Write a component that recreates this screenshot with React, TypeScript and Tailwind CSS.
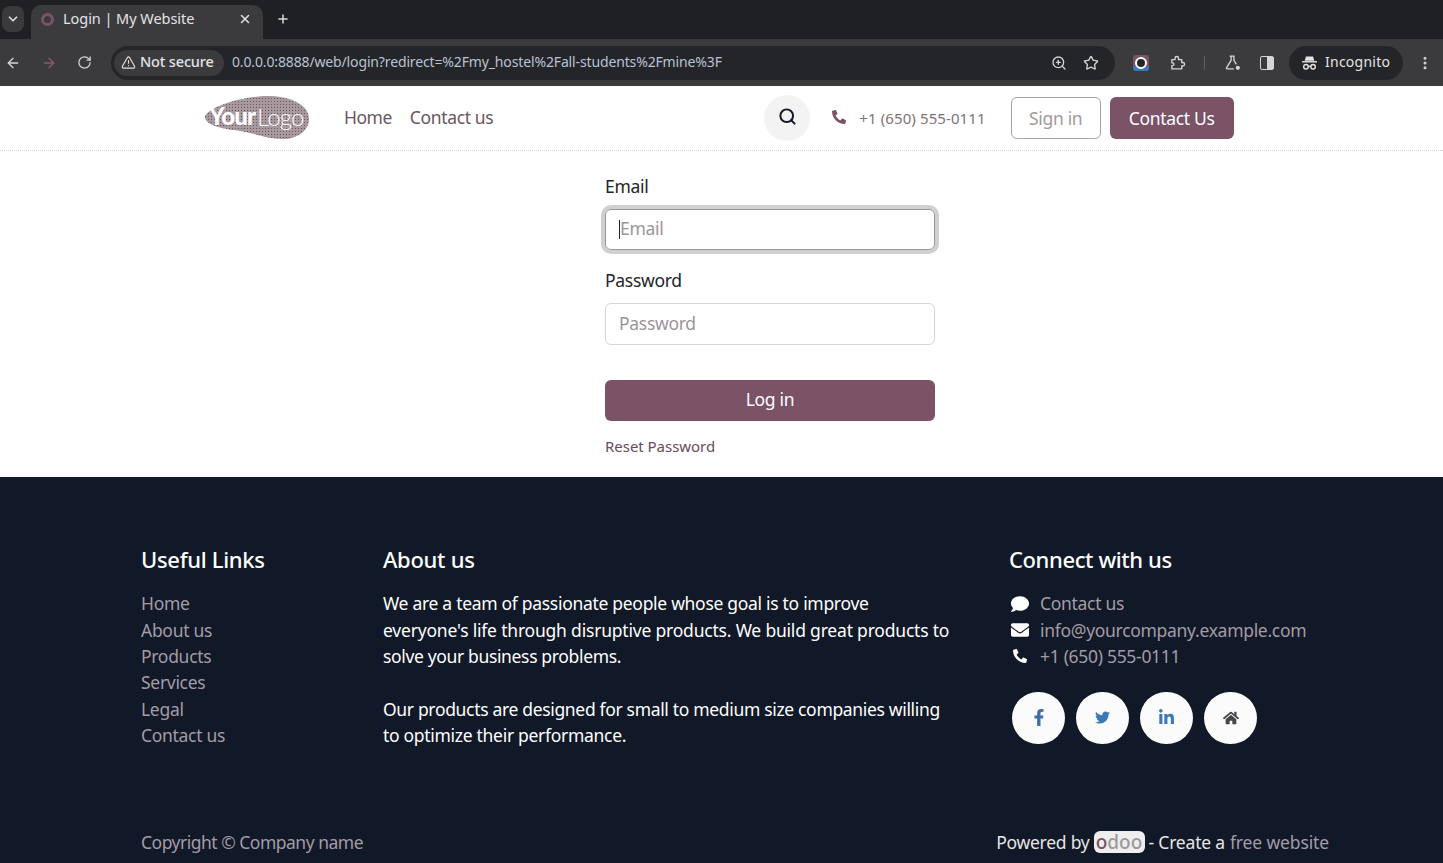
import {
  ArrowLeft,
  ArrowRight,
  ChevronDown,
  MoreVertical,
  Plus,
  RotateCw,
  Search,
  Star,
  TriangleAlert,
  X,
  ZoomIn,
} from 'lucide-react';
import { FaComment, FaEnvelope, FaFacebookF, FaHome, FaLinkedinIn, FaPhone, FaTwitter } from 'react-icons/fa';

const usefulLinks = ['Home', 'About us', 'Products', 'Services', 'Legal', 'Contact us'];

const contacts = [
  { text: 'Contact us', icon: <FaComment className="w-[18px] h-[18px]" /> },
  { text: 'info@yourcompany.example.com', icon: <FaEnvelope className="w-[18px] h-[18px]" /> },
  { text: '+1 (650) 555-0111', icon: <FaPhone className="w-[14px] h-[14px] ml-0.5 -scale-x-100" /> },
];

const socials = [
  { name: 'facebook', icon: <FaFacebookF className="w-[14px] h-[17px] text-[#3b6fb0]" /> },
  { name: 'twitter', icon: <FaTwitter className="w-[15px] h-[15px] text-[#3b78b8]" /> },
  { name: 'linkedin', icon: <FaLinkedinIn className="w-[17px] h-[17px] text-[#3b78b8]" /> },
  { name: 'home', icon: <FaHome className="w-[16px] h-[16px] text-[#44474f]" /> },
];

function BrowserChrome() {
  return (
    <div>
      {/* Tab strip */}
      <div className="h-[39px] bg-[#1f2023] flex items-end pl-[2px]">
        <div className="w-[22px] h-[26px] mb-[7px] rounded-lg bg-[#3a3a3d] flex items-center justify-center text-[#d8d8da]">
          <ChevronDown className="w-3.5 h-3.5" strokeWidth={3} />
        </div>
        <div className="ml-[7px] w-[232px] h-[34px] pb-[6px] rounded-t-[10px] bg-[#3b3b3e] flex items-center pl-[10px] pr-[11px] text-[#e3e3e5]">
          <span className="w-[13px] h-[13px] rounded-full border-[3px] border-[#7c5266]" />
          <span className="ml-[9px] text-[14.5px] flex-1 tracking-[-0.05px]">Login | My Website</span>
          <X className="w-3.5 h-3.5" strokeWidth={2.5} />
        </div>
        <Plus className="ml-[13px] mb-[13px] w-3.5 h-3.5 text-[#dcdcde]" strokeWidth={2.5} />
      </div>

      {/* Toolbar */}
      <div className="h-[47px] bg-[#3b3b3e] flex items-center pl-[5px] text-[#d5d5d8]">
        <ArrowLeft className="w-4 h-4" strokeWidth={2} />
        <ArrowRight className="ml-[20px] w-4 h-4 text-[#8a5a70]" strokeWidth={2} />
        <RotateCw className="ml-[20px] w-[15px] h-[15px]" strokeWidth={2} />
        <div className="ml-[19px] w-[1004px] h-[34px] rounded-full bg-[#242528] flex items-center pl-[3px] pr-[16px]">
          <div className="h-[26px] w-[110px] rounded-full bg-[#3b3b3e] flex items-center pl-[7px] text-[#e3e3e5]">
            <TriangleAlert className="w-[15px] h-[15px]" strokeWidth={1.8} />
            <span className="ml-[4px] -mt-[2px] text-[14.5px] font-medium tracking-[-0.15px]">Not secure</span>
          </div>
          <span className="ml-[8px] -mt-[2px] text-[14px] tracking-[-0.14px] text-[#b9c2d6] flex-1">
            0.0.0.0:8888/web/login?redirect=%2Fmy_hostel%2Fall-students%2Fmine%3F
          </span>
          <ZoomIn className="w-4 h-4" strokeWidth={2} />
          <Star className="ml-[16px] w-4 h-4" strokeWidth={2} />
        </div>
        <div className="ml-[18px] w-4 h-4 rounded-[3px] bg-[linear-gradient(#7c5266_70%,#3b78b8_70%)] flex items-center justify-center">
          <span className="w-[12px] h-[12px] rounded-full border-2 border-white bg-[#242528]" />
        </div>
        {/* extensions puzzle piece */}
        <svg viewBox="0 0 24 24" fill="none" stroke="currentColor" strokeWidth="1.9" strokeLinejoin="round" className="ml-[20px] w-[17px] h-[17px]">
          <path d="M4 8h4.5V6a2.5 2.5 0 0 1 5 0v2H18v4h1.5a2.5 2.5 0 0 1 0 5H18v4H4v-4.5h1a2 2 0 0 0 0-4H4z" />
        </svg>
        <span className="ml-[18px] w-px h-[14px] bg-[#7c5266]" />
        {/* labs flask with status dot */}
        <svg viewBox="0 0 24 24" fill="none" stroke="currentColor" strokeWidth="1.9" strokeLinejoin="round" className="ml-[19px] w-[17px] h-[17px]">
          <path d="M8 3h7M10 3v6L3.5 19.5A1.2 1.2 0 0 0 4.5 21H14M14 3v6l3.5 5.5" />
          <circle cx="19.5" cy="19.5" r="3" fill="currentColor" stroke="none" />
        </svg>
        <div className="ml-[19px] w-[14px] h-[14px] rounded-[2px] border border-[#d5d5d8] flex justify-end">
          <span className="w-[6px] h-full bg-[#d5d5d8]" />
        </div>
        <div className="ml-[15px] h-[34px] w-[114px] rounded-full bg-[#242528] flex items-center pl-[12px] text-[#e3e3e5]">
          {/* incognito hat and glasses */}
          <svg viewBox="0 0 24 24" className="w-[17px] h-[17px]" fill="none" stroke="currentColor" strokeWidth="2">
            <path d="M7 3.5h10l1.8 6H5.2z" fill="currentColor" stroke="none" />
            <path d="M1.5 11h21" />
            <circle cx="7" cy="18" r="3.2" />
            <circle cx="17" cy="18" r="3.2" />
            <path d="M10 17.5h4" />
          </svg>
          <span className="ml-[7px] -mt-[2px] text-[14px] tracking-[0.25px]">Incognito</span>
        </div>
        <MoreVertical className="ml-[14px] w-4 h-4" strokeWidth={2.5} />
      </div>
    </div>
  );
}

function Logo() {
  return (
    <svg width="106" height="46" viewBox="0 0 106 46" className="block">
      <defs>
        <pattern id="logo-dots" width="3" height="3" patternUnits="userSpaceOnUse">
          <rect width="3" height="3" fill="#a69a9f" />
          <rect width="1" height="1" fill="#75505f" />
        </pattern>
      </defs>
      <path
        d="M0 21 C5 12 30 3 58 1 C82 0 104 8 104 24 C104 36 92 44 78 44 C60 44 48 37 28 35 C14 33 -1 29 0 21 Z"
        fill="url(#logo-dots)"
      />
      <text x="4" y="30" fontFamily="Lato, sans-serif" fontWeight="900" fontSize="24" letterSpacing="-0.8" fill="#fff">
        Your
      </text>
      <text x="52" y="31" fontFamily="Lato, sans-serif" fontWeight="300" fontSize="24" letterSpacing="-0.8" fill="#fff">
        Logo
      </text>
    </svg>
  );
}

function SiteHeader() {
  return (
    <header className="h-[65px] bg-white border-b border-dotted border-[#d4d4d4] flex items-center pl-[205px] text-[17.5px] tracking-[-0.3px]">
      <Logo />
      <a className="ml-[33px] -mt-[2px] text-[#6b5560] tracking-[-0.5px]">Home</a>
      <a className="ml-[18px] -mt-[2px] text-[#6b5560] tracking-[-0.35px]">Contact us</a>
      <div className="ml-[271px] w-[46px] h-[46px] rounded-full bg-[#f3f3f3] flex items-center justify-center">
        <Search className="w-[19px] h-[19px] mb-[3px] text-[#111827]" strokeWidth={2.5} />
      </div>
      <FaPhone className="ml-[22px] -mt-[2px] w-[14px] h-[14px] text-[#7c5266] -scale-x-100" />
      <span className="ml-[13px] text-[15px] tracking-[0.1px] text-[#7d7278]">+1 (650) 555-0111</span>
      <a className="ml-[25px] w-[90px] h-[42px] rounded-md border border-[#a9a2a6] flex items-center justify-center text-[#9f9a9d]">
        Sign in
      </a>
      <a className="ml-[9px] w-[124px] h-[42px] rounded-md bg-[#7c5266] flex items-center justify-center text-white">
        Contact Us
      </a>
    </header>
  );
}

function LoginForm() {
  return (
    <main className="h-[326px] bg-white pt-[23px] pl-[605px]">
      <form className="w-[330px] text-[#212529] text-[17.5px] tracking-[-0.3px]">
        <label className="block h-[25px] leading-[25px]">Email</label>
        <div className="mt-[10px] h-[41px] pb-[2px] rounded-md border border-[#9b9599] ring-4 ring-[#d0d0d0] flex items-center px-[13px]">
          <span className="w-px h-[19px] mt-[2px] bg-[#212529]" />
          <span className="text-[#9b9599]">Email</span>
        </div>
        <label className="mt-[18px] block h-[25px] leading-[25px]">Password</label>
        <div className="mt-[10px] h-[42px] pb-[2px] rounded-md border border-[#d5d5d5] flex items-center px-[13px] text-[#9b9599]">
          Password
        </div>
        <button type="button" className="mt-[35px] w-full h-[41px] pb-[2px] rounded-md bg-[#7c5266] text-white">
          Log in
        </button>
        <a className="mt-[14px] block text-[15px] tracking-[-0.03px] text-[#6b4a5a]">Reset Password</a>
      </form>
    </main>
  );
}

function SiteFooter() {
  return (
    <footer className="h-[386px] bg-[#111827] pt-[67px] pl-[141px] pr-[114px] text-[17.5px] leading-[26.3px] tracking-[-0.3px] text-white">
      <div className="grid grid-cols-[242px_626px_1fr] h-[285px]">
        <div>
          <h5 className="text-[22px] font-medium leading-[30px] mb-[16.4px]">Useful Links</h5>
          {usefulLinks.map((link) => (
            <div key={link} className="text-[#a39ca6]">
              {link}
            </div>
          ))}
        </div>
        <div>
          <h5 className="text-[22px] font-medium leading-[30px] mb-[16.4px]">About us</h5>
          <p>
            We are a team of passionate people whose goal is to improve
            <br />
            <span className="tracking-[-0.2px]">everyone's life through disruptive products. We build great products to</span>
            <br />
            <span className="tracking-[-0.35px]">solve your business problems.</span>
          </p>
          <p className="mt-[26.3px]">
            <span className="tracking-[-0.33px]">Our products are designed for small to medium size companies willing</span>
            <br />
            to optimize their performance.
          </p>
        </div>
        <div>
          <h5 className="text-[22px] font-medium leading-[30px] mb-[16.4px] tracking-[-0.4px]">Connect with us</h5>
          {contacts.map((c) => (
            <div key={c.text} className="flex items-center">
              <span className="w-[31px] pl-[2px] shrink-0">{c.icon}</span>
              <span className="text-[#a39ca6]">{c.text}</span>
            </div>
          ))}
          <div className="mt-[22.6px] ml-[3px] flex gap-[11px]">
            {socials.map((s) => (
              <a key={s.name} className="w-[53px] h-[52px] rounded-full bg-[#fbfbfb] flex items-center justify-center">
                {s.icon}
              </a>
            ))}
          </div>
        </div>
      </div>
      <div className="flex justify-between items-center text-[#e6e6e6]">
        <span className="text-[#a39ca6] tracking-[-0.5px]">Copyright © Company name</span>
        <span className="flex items-center">
          <span className="tracking-[-0.25px]">Powered by</span>
          <span className="mx-[4px] w-[51px] h-[22px] rounded-[6px] bg-[#eeeeee] flex items-center justify-center text-[19px] leading-none font-medium tracking-[0px] text-[#a0989c]">
            <span className="text-[#7c5266]">o</span>doo
          </span>
          <span className="tracking-[-0.2px]">- Create a</span>
          <span className="ml-[5px] tracking-[-0.13px] text-[#a39ca6]">free website</span>
        </span>
      </div>
    </footer>
  );
}

export default function App() {
  return (
    <div className="w-[1443px] h-[863px] overflow-hidden font-['Noto_Sans',sans-serif]">
      <BrowserChrome />
      <SiteHeader />
      <LoginForm />
      <SiteFooter />
    </div>
  );
}
